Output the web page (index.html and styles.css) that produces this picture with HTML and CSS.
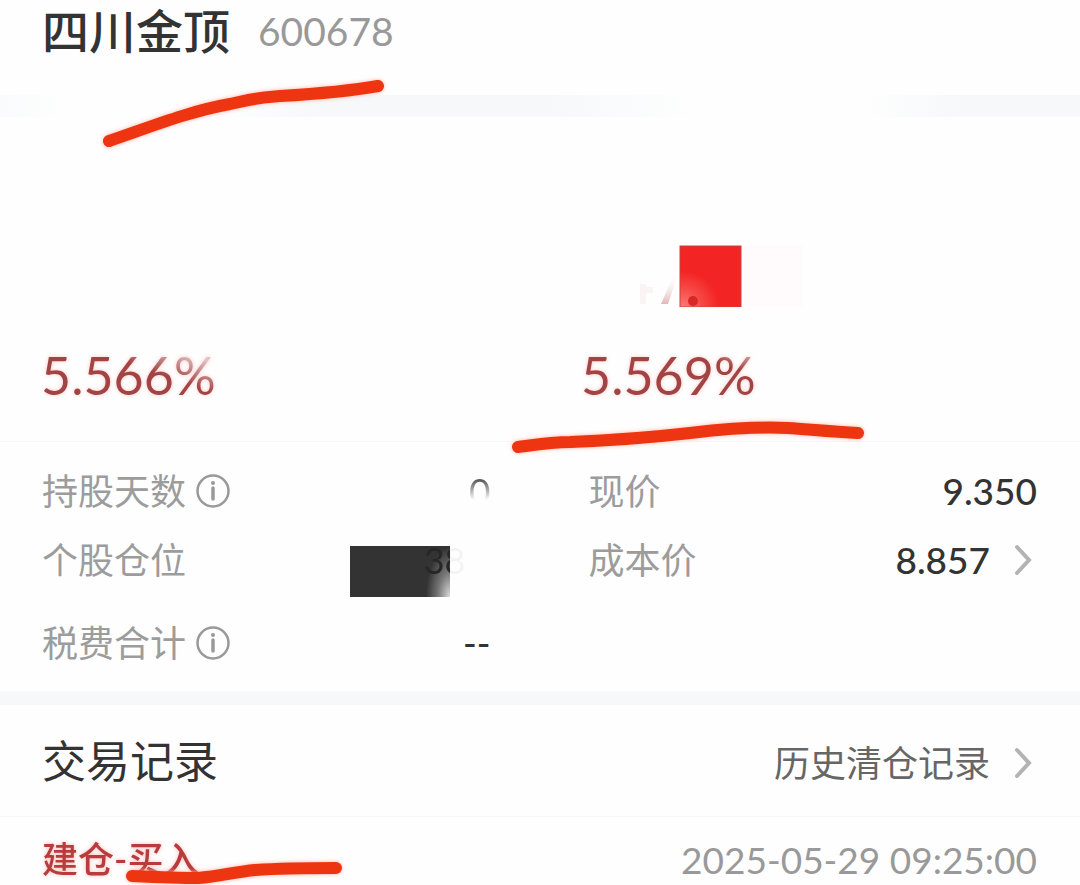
FILE: index.html
```html
<!DOCTYPE html>
<html lang="zh-CN">
<head>
<meta charset="utf-8">
<meta name="viewport" content="width=device-width, initial-scale=1">
<title>四川金顶 600678</title>
<link rel="stylesheet" href="styles.css">
</head>
<body>
<main class="page">
  <header class="stock">
    <h1 class="stock-name">四川金顶</h1>
    <span class="stock-code">600678</span>
    <svg class="mark mark-header" width="290" height="76" viewBox="100 76 290 76" aria-hidden="true">
      <path d="M109 141C150 127 190 111 230 104C250 99 262 97 280 96C315 94 345 92 378 86"/>
    </svg>
  </header>
  <div class="band band-faded"></div>

  <section class="metrics">
    <div class="metric">
      <p class="percent percent-left">5.566%</p>
    </div>
    <div class="metric">
      <svg class="block" width="168" height="62" viewBox="636 245 168 62" aria-hidden="true">
        <defs>
          <radialGradient id="glow" gradientUnits="userSpaceOnUse" cx="683" cy="307" r="36">
            <stop offset="0" stop-color="#fb7a76"/>
            <stop offset="0.5" stop-color="#f64a48"/>
            <stop offset="1" stop-color="#f32424"/>
          </radialGradient>
          <linearGradient id="slash" x1="0" y1="0" x2="0" y2="1">
            <stop offset="0" stop-color="#fff" stop-opacity="0"/>
            <stop offset="1" stop-color="#e0b6b6"/>
          </linearGradient>
        </defs>
        <path d="M640 284h6v20h-6zM646 287h7v6h-7z" fill="#fbf4f4"/>
        <path d="M678 274L668 304H661L674 274Z" fill="url(#slash)"/>
        <rect x="741" y="245" width="62" height="62" fill="#fffafb"/>
        <rect class="block-face" x="680" y="246" width="61" height="61" fill="url(#glow)"/>
        <circle cx="693" cy="301" r="5" fill="#d92727"/>
      </svg>
      <p class="percent percent-right">5.569%</p>
    </div>
    <svg class="mark mark-metrics" width="364" height="46" viewBox="506 414 364 46" aria-hidden="true">
      <path d="M518 447C540 444 552 442 570 442C620 440 655 437 690 433C740 427 765 427 788 428C815 430 835 432 858 433"/>
    </svg>
  </section>

  <section class="details">
    <dl class="detail-list">
      <div class="row">
        <dt>持股天数
          <svg class="info" width="34" height="34" viewBox="0 0 34 34" aria-hidden="true"><circle cx="17" cy="17" r="15.5"/><path d="M17 14v11"/><circle class="dot" cx="17" cy="9" r="2"/></svg>
        </dt>
        <dd class="days">0</dd>
      </div>
      <div class="row">
        <dt>个股仓位</dt>
        <dd class="position"><span class="cover"></span><span class="share">38</span></dd>
      </div>
      <div class="row row-last">
        <dt>税费合计
          <svg class="info" width="34" height="34" viewBox="0 0 34 34" aria-hidden="true"><circle cx="17" cy="17" r="15.5"/><path d="M17 14v11"/><circle class="dot" cx="17" cy="9" r="2"/></svg>
        </dt>
        <dd>--</dd>
      </div>
    </dl>
    <dl class="detail-list">
      <div class="row">
        <dt>现价</dt>
        <dd>9.350</dd>
      </div>
      <div class="row">
        <dt>成本价</dt>
        <dd class="linked">8.857
          <svg class="chevron" width="18" height="32" viewBox="0 0 18 32" aria-hidden="true"><path d="M3 3L15 16L3 29"/></svg>
        </dd>
      </div>
    </dl>
  </section>
  <div class="band band-thin"></div>

  <section class="records">
    <div class="records-head">
      <h2 class="records-title">交易记录</h2>
      <a class="history" href="#history">历史清仓记录
        <svg class="chevron" width="18" height="32" viewBox="0 0 18 32" aria-hidden="true"><path d="M3 3L15 16L3 29"/></svg>
      </a>
    </div>
    <div class="record">
      <span class="trade">建仓-买入</span>
      <time class="time" datetime="2025-05-29T09:25:00">2025-05-29 09:25:00</time>
      <svg class="mark mark-record" width="230" height="29" viewBox="120 856 230 29" aria-hidden="true">
        <path d="M132 876C155 877 178 878 198 878C220 876 235 872 255 870C285 868 310 868 336 868"/>
      </svg>
    </div>
  </section>
</main>
</body>
</html>
```
FILE: styles.css
```css
* {
  box-sizing: border-box;
}

body,
h1,
h2,
p,
dl,
dd {
  margin: 0;
}

body {
  background: #fefefe;
  color: #333;
  font-family: Lato, "Noto Sans CJK SC", sans-serif;
  font-size: 36px;
  line-height: 1;
}

.page {
  overflow: hidden;
}

.stock {
  position: relative;
  display: flex;
  align-items: center;
  gap: 28px;
  padding: 0 42px 33px;
}

.stock-name {
  font-size: 47px;
  line-height: 62px;
  font-weight: 500;
}

.stock-code {
  color: #999;
  font-size: 39px;
}

.mark {
  position: absolute;
  z-index: 1;
  fill: none;
  stroke: #ee3512;
  stroke-width: 12;
  stroke-linecap: round;
  stroke-linejoin: round;
  filter: drop-shadow(0 0 2px #ffb5a5);
}

.mark-header {
  top: 76px;
  left: 100px;
}

.mark-metrics {
  top: 297px;
  left: 506px;
}

.mark-record {
  top: 39px;
  left: 120px;
}

.band {
  height: 14px;
  background: #f6f8fa;
}

.band-faded {
  height: 22px;
  background: linear-gradient(90deg, #fafbfc, #fefefe 7%, #fefefe 20%, #f6f8fa 30%, #f6f8fa 50%, #fefefe 65%, #fefefe 80%, #f6f8fa 89%);
}

.metrics {
  position: relative;
  display: grid;
  grid-template-columns: 1fr 1fr;
  align-items: end;
  padding: 128px 0 36px;
  border-bottom: 1px solid #f7f7f7;
}

.metric {
  padding-left: 41px;
}

.block {
  display: block;
  margin-left: 55px;
}

.block-face {
  stroke: #c94343;
  stroke-width: 1;
}

.percent {
  width: max-content;
  margin-top: 38px;
  font-size: 52px;
  line-height: 60px;
  color: transparent;
  background-clip: text;
  -webkit-background-clip: text;
  filter: drop-shadow(0 0 2px #ffc9c9);
}

.percent-left {
  background-image: linear-gradient(20deg, #a24444 60%, #e0c4c4 85%);
}

.percent-right {
  background-image: linear-gradient(20deg, #a24444 75%, #d8bcbc 95%);
}

.details {
  display: grid;
  grid-template-columns: 1fr 1fr;
  column-gap: 98px;
  padding: 14px 43px 14px 42px;
}

.row {
  display: flex;
  align-items: center;
  justify-content: space-between;
  height: 69px;
}

.row-last {
  margin-top: 14px;
}

.row dt {
  display: flex;
  align-items: center;
  gap: 10px;
  color: #9c9c9c;
  font-weight: 400;
}

.row dd {
  font-size: 37px;
  font-weight: 500;
}

.info {
  fill: none;
  stroke: #999;
  stroke-width: 2.5;
}

.info path {
  stroke-width: 3.5;
  stroke-linecap: round;
}

.info .dot {
  fill: #999;
  stroke: none;
}

.row .days {
  font-weight: 400;
  color: transparent;
  background: linear-gradient(#555 20%, #fefefe 75%);
  background-clip: text;
  -webkit-background-clip: text;
}

.position {
  position: relative;
  padding-right: 25px;
}

.cover {
  position: absolute;
  top: 5px;
  right: 41px;
  width: 100px;
  height: 51px;
  background: radial-gradient(ellipse 24px 50px at 100% 100%, #ddd, #777 50%, #333);
}

.share {
  position: relative;
  font-size: 36px;
  font-weight: 400;
  color: transparent;
  background: linear-gradient(90deg, #272727 61%, #f3f3f3 63%);
  background-clip: text;
  -webkit-background-clip: text;
}

.row .linked {
  display: flex;
  align-items: center;
  gap: 24px;
}

.linked,
.history {
  padding-right: 5px;
}

.chevron {
  fill: none;
  stroke: #b3b3b3;
  stroke-width: 4;
  stroke-linecap: round;
}

.records-head {
  display: flex;
  align-items: center;
  justify-content: space-between;
  height: 112px;
  padding: 0 43px 0 42px;
  border-bottom: 1px solid #f7f8f9;
}

.records-title {
  font-size: 44px;
  font-weight: 400;
}

.history {
  display: flex;
  align-items: center;
  gap: 24px;
  padding-top: 4px;
  color: #666;
  text-decoration: none;
}

.record {
  position: relative;
  display: flex;
  align-items: center;
  justify-content: space-between;
  height: 84px;
  padding: 0 43px 0 42px;
}

.trade {
  color: #b83c3c;
  font-weight: 500;
  filter: drop-shadow(0 0 2px #ffb8b8);
}

.time {
  color: #999;
  font-size: 37px;
}
```
